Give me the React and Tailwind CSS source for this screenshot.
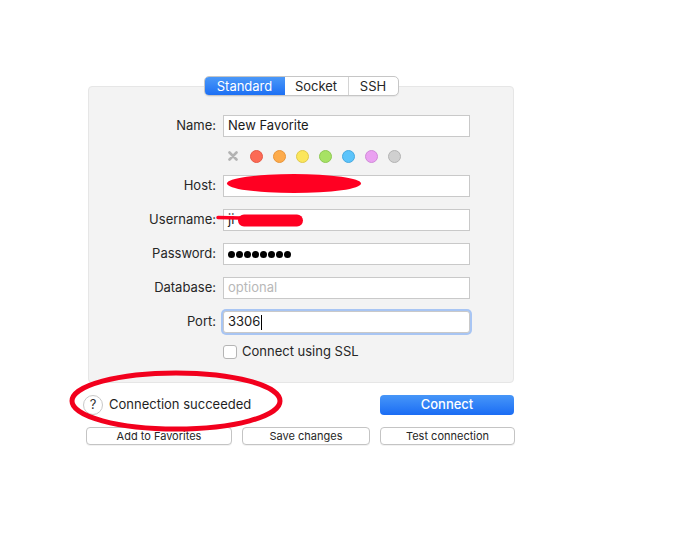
import React from "react";

const colors = [
  ["bg-[#fc6a55]", "border-[#e65a46]"],
  ["bg-[#fdab4b]", "border-[#e8953a]"],
  ["bg-[#fbe65c]", "border-[#e0c94a]"],
  ["bg-[#a7e264]", "border-[#8ec953]"],
  ["bg-[#5cc4fb]", "border-[#47a9e0]"],
  ["bg-[#eaa1f1]", "border-[#d08ad8]"],
  ["bg-[#d0d0d0]", "border-[#b3b3b3]"],
];

// Label + field row
const Row = ({ label, children }) => (
  <div className="flex items-center h-[22px]">
    <div className="w-[127px] mr-[7px] text-right text-[13px] text-[#262626]">
      {label}
    </div>
    {children}
  </div>
);

const Field = ({ children, className = "" }) => (
  <div
    className={`
      w-[247px]
      h-[22px]
      bg-white
      border
      border-[#c9c9c9]
      flex
      items-center
      px-[4px]
      text-[13px]
      text-[#1a1a1a]
      ${className}
    `}
  >
    {children}
  </div>
);

const SmallButton = ({ label, width }) => (
  <button
    className={`
      ${width}
      h-[18px]
      bg-white
      border
      border-[#c4c4c4]
      rounded-[4px]
      text-[11px]
      text-[#262626]
      leading-none
      shadow-[0_1px_0_rgba(0,0,0,0.05)]
    `}
  >
    {label}
  </button>
);

export default function App() {
  return (
    <div className="relative w-[676px] h-[547px] bg-white font-['Inter','Liberation_Sans',sans-serif] overflow-hidden">
      <div className="pt-[76px] ml-[88px] w-[426px]">
        {/* Tabs */}
        <div className="relative z-10 flex justify-center">
          <div className="flex h-[20px] rounded-[5px] border border-[#c6c6c6] bg-white overflow-hidden text-[13px] leading-[19px] shadow-[0_1px_1px_rgba(0,0,0,0.06)]">
            <div className="w-[80px] flex items-center justify-center pt-[1px] text-white bg-gradient-to-b from-[#4a98f8] to-[#1c6ff4]">
              Standard
            </div>
            <div className="w-[64px] flex items-center justify-center pt-[1px] text-[#262626] border-r border-[#d4d4d4]">
              Socket
            </div>
            <div className="w-[49px] flex items-center justify-center pt-[1px] text-[#262626]">
              SSH
            </div>
          </div>
        </div>

        {/* Panel */}
        <div className="-mt-[10px] h-[297px] bg-[#f3f3f3] border border-[#e6e6e6] rounded-[4px] pt-[28px] flex flex-col gap-[12px]">
          <Row label="Name:">
            <Field>New Favorite</Field>
          </Row>

          <div className="flex items-center h-[14px] pl-[139px] gap-[10px]">
            <svg width="10" height="10" viewBox="0 0 10 10" className="mr-[2px]">
              <path d="M1.5 1.5 L8.5 8.5 M8.5 1.5 L1.5 8.5" stroke="#b3b3b3" strokeWidth="2.6" strokeLinecap="round" />
            </svg>
            {colors.map(([bg, bd], i) => (
              <div key={i} className={`w-[13px] h-[13px] rounded-full border ${bg} ${bd}`} />
            ))}
          </div>

          <Row label="Host:">
            <Field />
          </Row>
          <Row label="Username:">
            <Field>ji</Field>
          </Row>
          <Row label="Password:">
            <Field className="gap-[1px]">
              {Array.from({ length: 8 }).map((_, i) => (
                <span key={i} className="w-[7px] h-[7px] rounded-full bg-black" />
              ))}
            </Field>
          </Row>
          <Row label="Database:">
            <Field className="text-[#b8b8b8]">optional</Field>
          </Row>
          <Row label="Port:">
            <Field className="border-[#6e9de6] rounded-[3px] shadow-[0_0_0_2px_#a8c5f3]">
              3306
              <span className="inline-block w-[1px] h-[15px] bg-black ml-[1px]" />
            </Field>
          </Row>

          <div className="flex items-center h-[14px] pl-[134px] gap-[5px]">
            <div className="w-[14px] h-[14px] bg-white border border-[#b5b5b5] rounded-[3px]" />
            <span className="text-[13px] text-[#262626]">Connect using SSL</span>
          </div>
        </div>
      </div>

      {/* Status + Connect */}
      <div className="mt-[12px] ml-[83px] w-[431px] flex items-center justify-between">
        <div className="flex items-center gap-[6px]">
          <div className="w-[20px] h-[20px] rounded-full border border-[#c8c8c8] bg-white flex items-center justify-center text-[13px] text-[#333]">
            ?
          </div>
          <span className="text-[13px] text-[#1f1f1f]">Connection succeeded</span>
        </div>
        <button className="w-[134px] h-[20px] rounded-[4px] bg-gradient-to-b from-[#4796f8] to-[#1a6cf4] text-white text-[13px] font-medium">
          Connect
        </button>
      </div>

      {/* Bottom buttons */}
      <div className="mt-[12px] ml-[86px] flex gap-[10px]">
        <SmallButton label="Add to Favorites" width="w-[146px]" />
        <SmallButton label="Save changes" width="w-[128px]" />
        <SmallButton label="Test connection" width="w-[135px]" />
      </div>

      {/* Red marks */}
      <svg className="absolute left-0 top-0 pointer-events-none" width="676" height="547">
        <ellipse cx="294" cy="183.5" rx="67" ry="9.5" fill="#ff0022" />
        <path d="M218 217.5 L240 218" stroke="#ff0022" strokeWidth="3.5" strokeLinecap="round" />
        <rect x="238" y="214.5" width="65" height="12" rx="6" fill="#ff0022" />
        <ellipse cx="176" cy="401" rx="104" ry="28" fill="none" stroke="#f2001d" strokeWidth="5" />
      </svg>
    </div>
  );
}
